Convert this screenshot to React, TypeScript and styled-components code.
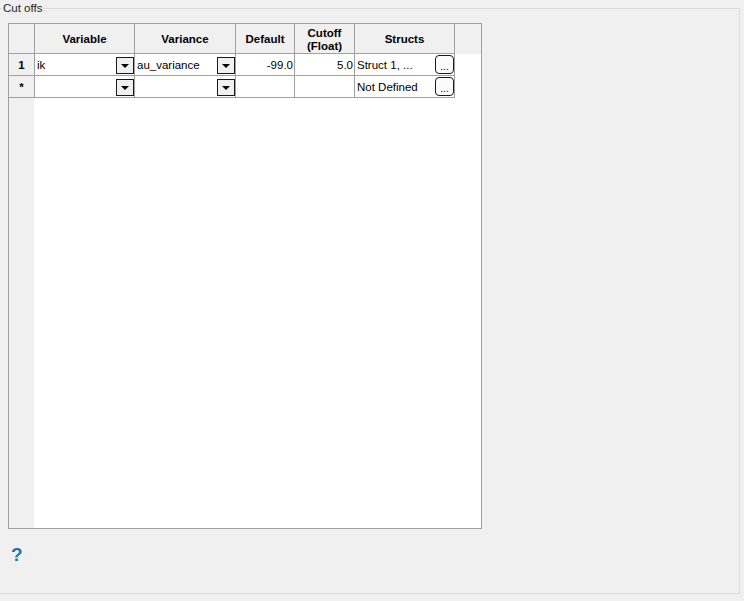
import React from 'react'
import styled, { createGlobalStyle } from 'styled-components'

const GlobalStyle = createGlobalStyle`
    html, body {
        margin: 0;
        padding: 0;
        background: #f0f0f0;
    }
    body {
        font-family: 'Liberation Sans', Arial, sans-serif;
        font-size: 11.5px;
        color: #000;
    }
`

const Page = styled.div`
    width: 744px;
    height: 601px;
    padding-top: 8px;
    box-sizing: border-box;
    overflow: hidden;
`

const GroupBox = styled.section`
    position: relative;
    width: 740px;
    height: 586px;
    box-sizing: border-box;
    border: 1px solid #dadada;
    border-left: none;
    padding: 14px 0 0 8px;
    display: flex;
    flex-direction: column;
`

const GroupLabel = styled.span`
    position: absolute;
    top: -8px;
    left: 2px;
    padding: 0 1px;
    background: #f0f0f0;
    line-height: 14px;
    color: #1e1e1e;
`

const GridBox = styled.div`
    width: 474px;
    height: 506px;
    box-sizing: border-box;
    border: 1px solid #a0a0a0;
    background: linear-gradient(to right, #f0f0f0 25px, #ffffff 25px);
`

const columns = '26px 100px 101px 59px 60px 100px'

const HeaderRow = styled.div`
    display: grid;
    grid-template-columns: ${columns};
    height: 30px;
    background: #f0f0f0;
`

const Row = styled.div`
    display: grid;
    grid-template-columns: ${columns};
    height: 22px;
`

const HeadCell = styled.div`
    box-sizing: border-box;
    border-right: 1px solid #a0a0a0;
    border-bottom: 1px solid #a0a0a0;
    display: flex;
    align-items: center;
    justify-content: center;
    text-align: center;
    font-weight: bold;
    line-height: 13px;
    padding-top: 2px;
`

const RowHead = styled(HeadCell)`
    background: #f0f0f0;
    padding-top: 1px;
`

const Cell = styled.div<{ $align?: 'left' | 'right' }>`
    box-sizing: border-box;
    border-right: 1px solid #a0a0a0;
    border-bottom: 1px solid #a0a0a0;
    background: #fff;
    display: flex;
    align-items: center;
    justify-content: ${({ $align }) => ($align === 'right' ? 'flex-end' : 'space-between')};
    padding: 0 1px 0 2px;
    white-space: nowrap;
    overflow: hidden;
`

const ComboCell = styled(Cell)`
    padding-right: 0;
`

const DropButton = styled.span`
    width: 18px;
    height: 17px;
    box-sizing: border-box;
    border: 1px solid #1a1a1a;
    background: #f0f0f0;
    display: flex;
    align-items: center;
    justify-content: center;
    flex-shrink: 0;
    margin-top: 1px;

    &::after {
        content: '';
        border-left: 4px solid transparent;
        border-right: 4px solid transparent;
        border-top: 4px solid #000;
        margin-top: 1px;
    }
`

const EllipsisButton = styled.span`
    width: 19px;
    height: 19px;
    box-sizing: border-box;
    border: 1px solid #1a1a1a;
    border-radius: 4px;
    background: #fbfbfb;
    display: flex;
    align-items: flex-end;
    justify-content: center;
    font-size: 10px;
    line-height: 13px;
    flex-shrink: 0;
`

const Help = styled.div`
    margin: 15px 0 0 3px;
    width: 14px;
    font-family: 'Liberation Sans', Arial, sans-serif;
    font-weight: bold;
    font-size: 19px;
    color: #1677b0;
    line-height: 22px;
`

const Combo = ({ value }: { value: string }) => (
    <ComboCell>
        <span>{value}</span>
        <DropButton />
    </ComboCell>
)

const Structs = ({ value }: { value: string }) => (
    <ComboCell>
        <span>{value}</span>
        <EllipsisButton>...</EllipsisButton>
    </ComboCell>
)

const rows = [
    { head: '1', variable: 'ik', variance: 'au_variance', def: '-99.0', cutoff: '5.0', structs: 'Struct 1, ...' },
    { head: '*', variable: '', variance: '', def: '', cutoff: '', structs: 'Not Defined' },
]

const App = (): JSX.Element => {
    return (
        <Page>
            <GlobalStyle />
            <GroupBox>
                <GroupLabel>Cut offs</GroupLabel>
                <GridBox>
                    <HeaderRow>
                        <HeadCell />
                        <HeadCell>Variable</HeadCell>
                        <HeadCell>Variance</HeadCell>
                        <HeadCell>Default</HeadCell>
                        <HeadCell>
                            Cutoff
                            <br />
                            (Float)
                        </HeadCell>
                        <HeadCell>Structs</HeadCell>
                    </HeaderRow>
                    {rows.map((row) => (
                        <Row key={row.head}>
                            <RowHead>{row.head}</RowHead>
                            <Combo value={row.variable} />
                            <Combo value={row.variance} />
                            <Cell $align="right">{row.def}</Cell>
                            <Cell $align="right">{row.cutoff}</Cell>
                            <Structs value={row.structs} />
                        </Row>
                    ))}
                </GridBox>
                <Help>?</Help>
            </GroupBox>
        </Page>
    )
}

export default App
